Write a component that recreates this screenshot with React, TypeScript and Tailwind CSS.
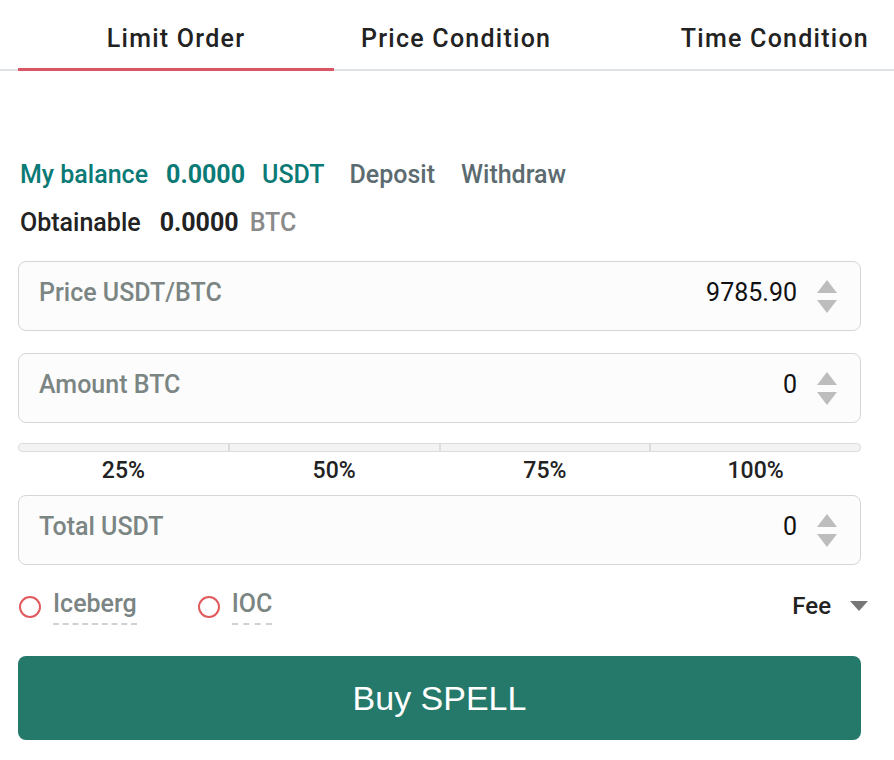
import { useState } from 'react';

const tabs = ['Limit Order', 'Price Condition', 'Time Condition'];

function Spinner() {
  return (
    <div className="flex flex-col items-center gap-[7px]">
      <svg width="20" height="13" viewBox="0 0 20 13" aria-hidden>
        <path d="M10 0 L20 13 L0 13 Z" fill="#bdbdbd" />
      </svg>
      <svg width="20" height="13" viewBox="0 0 20 13" aria-hidden>
        <path d="M0 0 L20 0 L10 13 Z" fill="#bdbdbd" />
      </svg>
    </div>
  );
}

function Field({ label, value }: { label: string; value: string }) {
  return (
    <div className="flex h-[70px] items-center rounded-[8px] border border-[#d6d6d6] bg-[#fcfcfc] pl-[20px] pr-[23px]">
      <span className="pb-[7px] text-[25px] font-medium text-[#7b8583]">{label}</span>
      <span className="ml-auto pb-[7px] text-[25px] text-[#111]">{value}</span>
      <div className="ml-[20px]">
        <Spinner />
      </div>
    </div>
  );
}

function Option({ label }: { label: string }) {
  return (
    <div className="flex items-center gap-[12px]">
      <span className="h-[22px] w-[22px] rounded-full border-2 border-[#e05a5e]" />
      <span className="border-b-2 border-dashed border-[#cfd2d2] pb-[4px] text-[25px] font-medium leading-[30px] text-[#7b8583]">
        {label}
      </span>
    </div>
  );
}

export default function App() {
  const [active, setActive] = useState(0);

  return (
    <div className="min-h-[760px] bg-white font-['Roboto','Liberation_Sans',sans-serif]">
      <div className="flex h-[71px] border-b-2 border-[#dfe2e5] pl-[18px]">
        {tabs.map((t, i) => (
          <button
            key={t}
            onClick={() => setActive(i)}
            className={
              'mb-[-2px] flex h-[71px] items-center justify-center pt-[10px] text-[25px] font-medium tracking-[0.05em] text-[#222] ' +
              (i === 0 ? 'w-[316px] ' : i === 1 ? 'pl-[27px] ' : 'ml-auto pr-[25px] ') +
              (active === i ? 'border-b-[3px] border-[#dc5563]' : 'border-b-[3px] border-transparent')
            }
          >
            {t}
          </button>
        ))}
      </div>

      <div className="pl-[18px] pr-[33px]">
        <div className="mt-[88px] flex h-[32px] items-center pl-[2px] text-[25px] font-medium">
          <span className="text-[#0a7a76]">My balance</span>
          <span className="ml-[18px] font-bold text-[#0a7a76]">0.0000</span>
          <span className="ml-[17px] text-[#0a7a76]">USDT</span>
          <span className="ml-[25px] text-[#5c6b70]">Deposit</span>
          <span className="ml-[26px] text-[#5c6b70]">Withdraw</span>
        </div>
        <div className="mt-[16px] flex h-[32px] items-center pl-[2px] text-[25px] font-medium">
          <span className="text-[#222]">Obtainable</span>
          <span className="ml-[19px] font-bold text-[#222]">0.0000</span>
          <span className="ml-[11px] text-[#8a8a8a]">BTC</span>
        </div>

        <div className="mt-[22px]">
          <Field label="Price USDT/BTC" value="9785.90" />
        </div>
        <div className="mt-[22px]">
          <Field label="Amount BTC" value="0" />
        </div>

        <div className="mt-[20px] flex h-[9px] overflow-hidden rounded-[4px] border border-[#dcdcdc] bg-[#f3f3f3]">
          {[0, 1, 2, 3].map(i => (
            <div key={i} className={'flex-1 ' + (i < 3 ? 'border-r-2 border-[#dcdcdc]' : '')} />
          ))}
        </div>
        <div className="mt-[2px] grid h-[28px] grid-cols-4 items-center text-center text-[23px] font-medium text-[#222]">
          <span>25%</span>
          <span>50%</span>
          <span>75%</span>
          <span>100%</span>
        </div>

        <div className="mt-[13px]">
          <Field label="Total USDT" value="0" />
        </div>

        <div className="mr-[-7px] mt-[24px] flex items-start pl-[1px]">
          <Option label="Iceberg" />
          <div className="ml-[61px]">
            <Option label="IOC" />
          </div>
          <div className="ml-auto flex h-[34px] items-center gap-[19px]">
            <span className="text-[24px] font-medium text-[#222]">Fee</span>
            <svg width="18" height="10" viewBox="0 0 18 10" aria-hidden>
              <path d="M0 0 L18 0 L9 10 Z" fill="#777" />
            </svg>
          </div>
        </div>

        <button className="mt-[31px] flex h-[84px] w-full items-center justify-center rounded-[8px] bg-[#25796b] font-['Liberation_Sans',sans-serif] text-[34px] text-white">
          Buy SPELL
        </button>
      </div>
    </div>
  );
}
